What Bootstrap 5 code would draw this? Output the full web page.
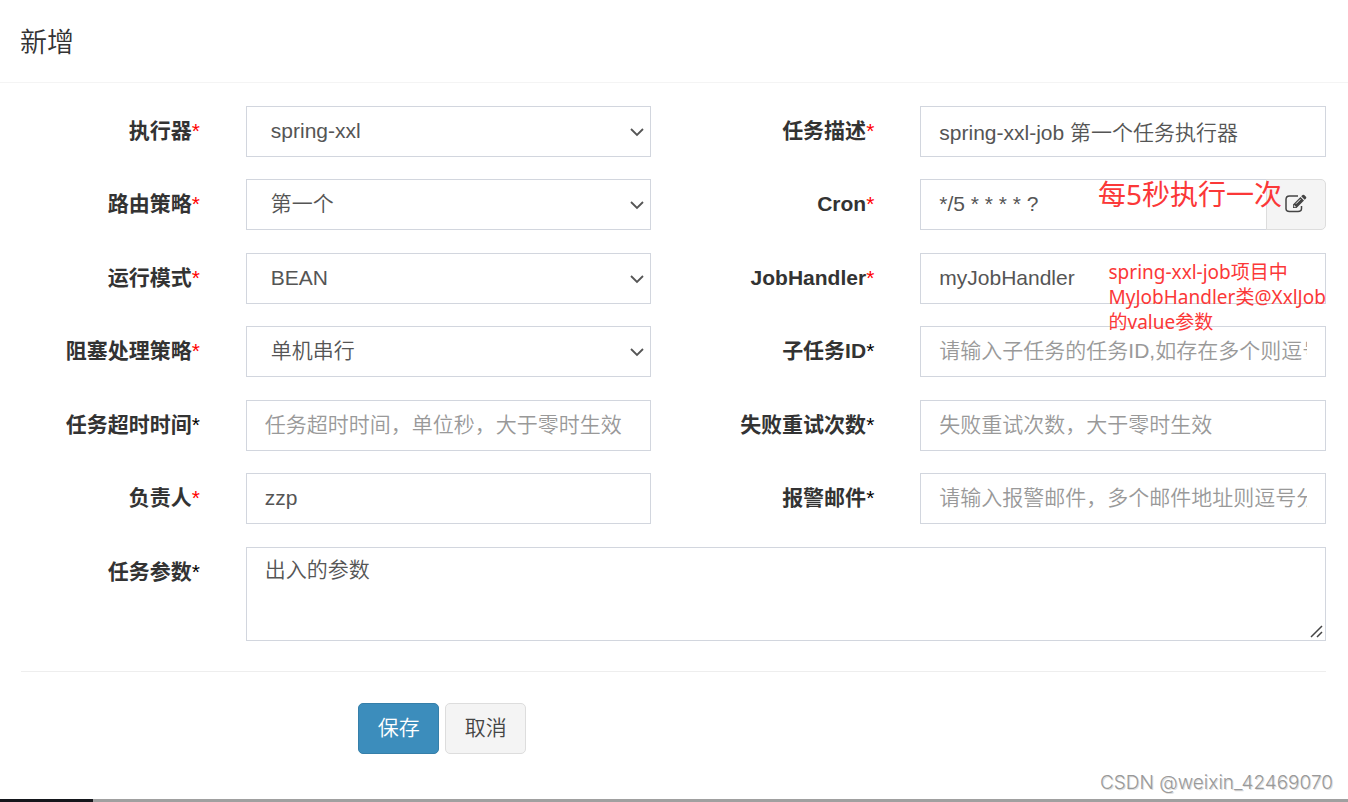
<!DOCTYPE html>
<html lang="zh-CN">
<head>
<meta charset="utf-8">
<meta name="viewport" content="width=device-width, initial-scale=1">
<title>新增</title>
<link href="https://cdn.jsdelivr.net/npm/bootstrap@5.3.0/dist/css/bootstrap.min.css" rel="stylesheet">
<style>
  body { font-family: "Liberation Sans", "Noto Sans CJK SC", sans-serif; font-size: 21px; line-height: 30px; color: #333; background: #fff; }
  .job-head { padding: 24px 20px 20px; border-bottom: 1px solid #f4f4f4; }
  .job-head h1 { font-size: 27px; line-height: 38px; font-weight: 350; }
  .job-body { padding: 23px 22px 0 21px; }
  .job-body .row { --bs-gutter-x: 44px; }
  .field-row { margin-bottom: 22px; }
  .field-row:nth-child(even) { margin-bottom: 23px; }
  .col-form-label { padding-top: 10px; padding-bottom: 10px; padding-right: 24px; line-height: 30px; font-weight: 700; text-align: right; }
  .req, .opt { font-weight: 400; }
  .req { color: #f00; }
  .opt { color: #000; }
  .form-control, .form-select { height: 51px; padding: 8px 18px 10px; font-size: 21px; font-weight: 350; line-height: 30px; color: #555; border: 1px solid #d2d6de; border-radius: 0; }
  .form-control::placeholder { color: #999; }
  .form-select { padding-left: 24px; background-position: right 6px center; background-size: 14px 10px;
    background-image: url("data:image/svg+xml,%3Csvg xmlns='http://www.w3.org/2000/svg' viewBox='0 0 14 10'%3E%3Cpath d='M1 2l6 6 6-6' fill='none' stroke='%23555' stroke-width='1.8'/%3E%3C/svg%3E"); }
  textarea.form-control { height: 94px; min-height: 94px; padding-top: 7px; }
  textarea::-webkit-resizer { background: url("data:image/svg+xml,%3Csvg xmlns='http://www.w3.org/2000/svg' viewBox='0 0 15 15'%3E%3Cpath d='M1 12L12 1M7 12l5-5' fill='none' stroke='%23444' stroke-width='1.5'/%3E%3C/svg%3E") center / 15px 15px no-repeat; }
  .btn { height: 51px; min-width: 81px; padding: 8px 18px 10px; font-size: 21px; font-weight: 350; line-height: 30px; border-radius: 5px; }
  .btn-save { color: #fff; background: #3c8dbc; border-color: #367fa9; }
  .btn-plain { color: #444; background: #f4f4f4; border-color: #ddd; }
  .btn-save:hover { color: #fff; background: #367fa9; border-color: #367fa9; }
  .btn-plain:hover { background: #e7e7e7; }
  .btn.cron-edit { width: 60px; min-width: 60px; }
  .btn-pair { gap: 6px; }
  .remark { position: absolute; z-index: 6; color: #fb3838; font-family: "Noto Sans", "Noto Sans CJK SC", sans-serif; white-space: nowrap; pointer-events: none; }
  .remark-cron { right: 66px; top: -5px; font-size: 28px; line-height: 40px; }
  .remark-handler { right: 22px; top: 7px; font-size: 19px; line-height: 25px; }
  .job-rule { margin: 30px 0 31px; border-top: 1px solid #eee; opacity: 1; }
  .credit { padding: 0 15px 4px; font-family: Inter, sans-serif; font-weight: 300; font-size: 19px; line-height: 24px; color: #999; text-shadow: 1px 1px 0 #ddd; }
  .scroll-track { height: 3px; background: #a0a0a0; }
  .scroll-thumb { width: 93px; background: #15171c; }
</style>
</head>
<body class="d-flex flex-column min-vh-100">
<header class="job-head"><h1 class="m-0">新增</h1></header>
<main class="job-body">
  <form>
    <div class="row field-row">
      <label class="col-2 col-form-label" for="group">执行器<span class="req">*</span></label>
      <div class="col-4"><select class="form-select" id="group"><option>spring-xxl</option></select></div>
      <label class="col-2 col-form-label" for="desc">任务描述<span class="req">*</span></label>
      <div class="col-4"><input class="form-control" id="desc" type="text" value="spring-xxl-job 第一个任务执行器"></div>
    </div>
    <div class="row field-row">
      <label class="col-2 col-form-label" for="route">路由策略<span class="req">*</span></label>
      <div class="col-4"><select class="form-select" id="route"><option>第一个</option></select></div>
      <label class="col-2 col-form-label" for="cron">Cron<span class="req">*</span></label>
      <div class="col-4 position-relative">
        <div class="input-group">
          <input class="form-control" id="cron" type="text" value="*/5 * * * * ?">
          <button class="btn btn-plain cron-edit d-flex align-items-center" type="button" aria-label="编辑 Cron">
            <svg width="22" height="20" viewBox="0 0 22 20" aria-hidden="true">
              <path d="M13 2H4.500Q1 2 1 5.500V14.500Q1 17.500 4.500 17.500H13Q16.500 17.500 16.500 14.500V12" fill="none" stroke="#444" stroke-width="1.500"/>
              <path d="M8 14V10.500L15.500 3L19 6.500L11.500 14Z M16.200 2.300L17.500 1Q18.300.300 19.200 1L21 2.800Q21.700 3.600 21 4.500L19.700 5.800Z" fill="#444"/>
              <path d="M9.300 11.300V12.700H10.700M11 9.700L15.500 5.200" fill="none" stroke="#f4f4f4"/>
            </svg>
          </button>
        </div>
        <div class="remark remark-cron">每5秒执行一次</div>
      </div>
    </div>
    <div class="row field-row">
      <label class="col-2 col-form-label" for="mode">运行模式<span class="req">*</span></label>
      <div class="col-4"><select class="form-select" id="mode"><option>BEAN</option></select></div>
      <label class="col-2 col-form-label" for="handler">JobHandler<span class="req">*</span></label>
      <div class="col-4 position-relative">
        <input class="form-control" id="handler" type="text" value="myJobHandler">
        <div class="remark remark-handler">spring-xxl-job项目中<br>MyJobHandler类@XxlJob<br>的value参数</div>
      </div>
    </div>
    <div class="row field-row">
      <label class="col-2 col-form-label" for="block">阻塞处理策略<span class="req">*</span></label>
      <div class="col-4"><select class="form-select" id="block"><option>单机串行</option></select></div>
      <label class="col-2 col-form-label" for="child">子任务ID<span class="opt">*</span></label>
      <div class="col-4"><input class="form-control" id="child" type="text" placeholder="请输入子任务的任务ID,如存在多个则逗号分隔"></div>
    </div>
    <div class="row field-row">
      <label class="col-2 col-form-label" for="timeout">任务超时时间<span class="opt">*</span></label>
      <div class="col-4"><input class="form-control" id="timeout" type="text" placeholder="任务超时时间，单位秒，大于零时生效"></div>
      <label class="col-2 col-form-label" for="retry">失败重试次数<span class="opt">*</span></label>
      <div class="col-4"><input class="form-control" id="retry" type="text" placeholder="失败重试次数，大于零时生效"></div>
    </div>
    <div class="row field-row">
      <label class="col-2 col-form-label" for="owner">负责人<span class="req">*</span></label>
      <div class="col-4"><input class="form-control" id="owner" type="text" value="zzp"></div>
      <label class="col-2 col-form-label" for="mail">报警邮件<span class="opt">*</span></label>
      <div class="col-4"><input class="form-control" id="mail" type="text" placeholder="请输入报警邮件，多个邮件地址则逗号分隔"></div>
    </div>
    <div class="row">
      <label class="col-2 col-form-label" for="param">任务参数<span class="opt">*</span></label>
      <div class="col-10"><textarea class="form-control" id="param">出入的参数</textarea></div>
    </div>
    <hr class="job-rule">
    <div class="row">
      <div class="offset-3 col-6 d-flex btn-pair">
        <button class="btn btn-save" type="submit">保存</button>
        <button class="btn btn-plain" type="button">取消</button>
      </div>
    </div>
  </form>
</main>
<footer class="mt-auto">
  <div class="credit text-end">CSDN @weixin_42469070</div>
  <div class="scroll-track d-flex"><div class="scroll-thumb"></div></div>
</footer>
<script src="https://cdn.jsdelivr.net/npm/bootstrap@5.3.0/dist/js/bootstrap.bundle.min.js"></script>
</body>
</html>
